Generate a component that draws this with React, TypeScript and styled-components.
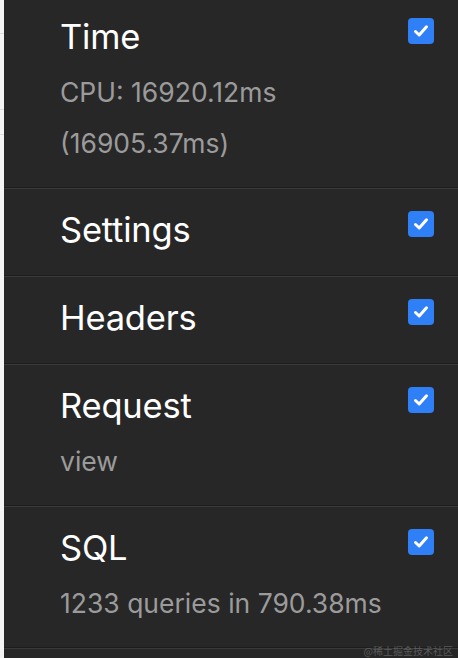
import styled, { createGlobalStyle } from "styled-components";

const GlobalStyle = createGlobalStyle`
    html, body {
        margin: 0;
        padding: 0;
        background: #272727;
        overflow: hidden;
    }
    body {
        font-family: Inter, "Noto Sans", "Liberation Sans", sans-serif;
        -webkit-font-smoothing: antialiased;
    }
`

const Page = styled.div`
    position: relative;
    display: flex;
    width: 458px;
    height: 658px;
    overflow: hidden;
    background: #272727;
`

const Strip = styled.div`
    width: 4px;
    flex-shrink: 0;
    background: #f4f4f4;
    display: flex;
    flex-direction: column;
`

const StripCell = styled.div<{ h: number }>`
    height: ${props => props.h}px;
    border-bottom: 1px solid #dcdcdc;
`

const Panel = styled.div`
    flex: 1;
    margin-top: -5px;
    display: flex;
    flex-direction: column;
`

const Row = styled.div<{ first?: boolean }>`
    display: flex;
    align-items: flex-start;
    justify-content: space-between;
    padding: 16px 24px 19px 56px;
    border-top: ${props => props.first ? "none" : "1px solid #1d1d1d"};
    box-shadow: ${props => props.first ? "none" : "inset 0 1px 0 #3a3a3a"};
`

const LastLine = styled.div`
    border-top: 1px solid #1d1d1d;
    box-shadow: inset 0 1px 0 #3a3a3a;
    height: 20px;
`

const TextWrapper = styled.div`
    display: flex;
    flex-direction: column;
`

const Title = styled.div`
    font-size: 34.5px;
    line-height: 52px;
    font-weight: 400;
    color: #ffffff;
    letter-spacing: -0.2px;
`

const Sub = styled.div`
    font-size: 26.5px;
    line-height: 52px;
    color: #9b9b9b;
    margin-top: 3px;
    margin-bottom: -1px;
    & + & {
        margin-top: 0;
    }
`

const Check = styled.div`
    width: 26px;
    height: 26px;
    margin-top: 7px;
    border-radius: 4px;
    background: #2f7ff7;
    display: flex;
    align-items: center;
    justify-content: center;
    flex-shrink: 0;
`

const Watermark = styled.div`
    position: absolute;
    right: 5px;
    bottom: 1px;
    font-family: "Noto Sans CJK SC", sans-serif;
    font-size: 10px;
    line-height: 12px;
    color: #5a5a5a;
`

function CheckBox() {
    return (
        <Check>
            <svg width="18" height="18" viewBox="0 0 18 18">
                <path d="M3.5 9.5 L7.2 13 L14.5 4.8" fill="none" stroke="#fff" strokeWidth="3" strokeLinecap="round" strokeLinejoin="round" />
            </svg>
        </Check>
    )
}

const sections = [
    { title: "Time", subs: ["CPU: 16920.12ms", "(16905.37ms)"] },
    { title: "Settings", subs: [] },
    { title: "Headers", subs: [] },
    { title: "Request", subs: ["view"] },
    { title: "SQL", subs: ["1233 queries in 790.38ms"] },
]

export default function App() {
    return (
        <>
            <GlobalStyle />
            <Page>
                <Strip>
                    <StripCell h={33} />
                    <StripCell h={75} />
                    <StripCell h={24} />
                </Strip>
                <Panel>
                    {sections.map((s, i) => (
                        <Row key={s.title} first={i === 0}>
                            <TextWrapper>
                                <Title>{s.title}</Title>
                                {s.subs.map(t => <Sub key={t}>{t}</Sub>)}
                            </TextWrapper>
                            <CheckBox />
                        </Row>
                    ))}
                    <LastLine />
                </Panel>
                <Watermark>@稀土掘金技术社区</Watermark>
            </Page>
        </>
    );
}
